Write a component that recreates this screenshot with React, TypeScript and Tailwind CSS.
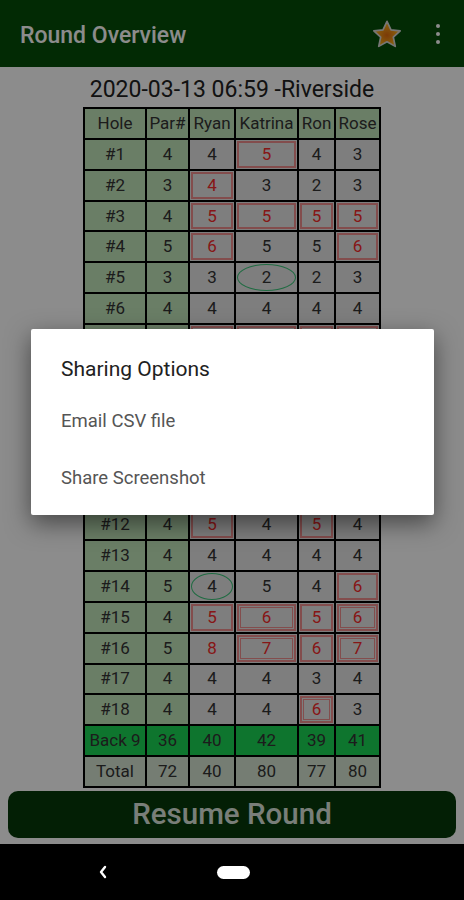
import React from 'react';

type Mark = '' | 'b' | 'd' | 'o' | 'r';
type Score = [number, Mark];

const font = { fontFamily: 'Roboto, "Liberation Sans", sans-serif' };

const players = ['Ryan', 'Katrina', 'Ron', 'Rose'];

const holes: { hole: string; par: number; scores: Score[] }[] = [
  { hole: '#1', par: 4, scores: [[4, ''], [5, 'b'], [4, ''], [3, '']] },
  { hole: '#2', par: 3, scores: [[4, 'b'], [3, ''], [2, ''], [3, '']] },
  { hole: '#3', par: 4, scores: [[5, 'b'], [5, 'b'], [5, 'b'], [5, 'b']] },
  { hole: '#4', par: 5, scores: [[6, 'b'], [5, ''], [5, ''], [6, 'b']] },
  { hole: '#5', par: 3, scores: [[3, ''], [2, 'o'], [2, ''], [3, '']] },
  { hole: '#6', par: 4, scores: [[4, ''], [4, ''], [4, ''], [4, '']] },
  { hole: '#7', par: 4, scores: [[5, 'b'], [5, 'b'], [5, 'b'], [5, 'b']] },
  { hole: '#8', par: 4, scores: [[4, ''], [4, ''], [5, 'b'], [5, 'b']] },
  { hole: '#9', par: 5, scores: [[5, ''], [5, ''], [6, 'b'], [5, '']] },
];

const back: { hole: string; par: number; scores: Score[] }[] = [
  { hole: '#10', par: 3, scores: [[2, ''], [5, 'd'], [2, ''], [4, 'b']] },
  { hole: '#11', par: 3, scores: [[4, 'b'], [3, ''], [4, 'b'], [3, '']] },
  { hole: '#12', par: 4, scores: [[5, 'b'], [4, ''], [5, 'b'], [4, '']] },
  { hole: '#13', par: 4, scores: [[4, ''], [4, ''], [4, ''], [4, '']] },
  { hole: '#14', par: 5, scores: [[4, 'o'], [5, ''], [4, ''], [6, 'b']] },
  { hole: '#15', par: 4, scores: [[5, 'b'], [6, 'd'], [5, 'b'], [6, 'd']] },
  { hole: '#16', par: 5, scores: [[8, 'r'], [7, 'd'], [6, 'b'], [7, 'd']] },
  { hole: '#17', par: 4, scores: [[4, ''], [4, ''], [3, ''], [4, '']] },
  { hole: '#18', par: 4, scores: [[4, ''], [4, ''], [6, 'd'], [3, '']] },
];

function ScoreCell({ score }: { score: Score }) {
  const [v, m] = score;
  if (m === 'b') {
    return (
      <div className="bg-[#e5e5e5] p-[1px] min-h-0 overflow-hidden">
        <div className="h-full border-2 border-[#ee8c8c] flex items-center justify-center text-[#f52a2a]">{v}</div>
      </div>
    );
  }
  if (m === 'd') {
    return (
      <div className="bg-[#e5e5e5] p-[1px] min-h-0 overflow-hidden">
        <div className="h-full border-2 border-[#ee8c8c] p-[1px]">
          <div className="h-full border border-[#ee8c8c] flex items-center justify-center text-[#f52a2a]">{v}</div>
        </div>
      </div>
    );
  }
  if (m === 'o') {
    return (
      <div className="bg-[#e5e5e5] p-[1px] min-h-0 overflow-hidden">
        <div className="h-full border-[1.5px] border-[#3cc47a] rounded-[50%] flex items-center justify-center">{v}</div>
      </div>
    );
  }
  return (
    <div className={`bg-[#e5e5e5] min-h-0 flex items-center justify-center ${m === 'r' ? 'text-[#f52a2a]' : ''}`}>{v}</div>
  );
}

function SumRow({ label, values, total }: { label: string; values: number[]; total?: boolean }) {
  const bg = total ? 'bg-[#d6e4d2]' : 'bg-[#1bd655]';
  return (
    <>
      <div className={`${bg} min-h-0 flex items-center justify-center`}>{label}</div>
      {values.map((v, i) => (
        <div key={i} className={`${bg} min-h-0 flex items-center justify-center`}>{v}</div>
      ))}
    </>
  );
}

function HoleRow({ row }: { row: { hole: string; par: number; scores: Score[] } }) {
  return (
    <>
      <div className="bg-[#c2e5bb] min-h-0 flex items-center justify-center">{row.hole}</div>
      <div className="bg-[#c2e5bb] min-h-0 flex items-center justify-center">{row.par}</div>
      {row.scores.map((s, i) => (
        <ScoreCell key={i} score={s} />
      ))}
    </>
  );
}

export default function App() {
  return (
    <div className="w-[464px] h-[900px] flex flex-col bg-white overflow-hidden" style={font}>
      <div className="relative h-[844px] flex flex-col">
        {/* app bar */}
        <div className="h-[67px] shrink-0 bg-[#054d08] flex items-center pl-[20px]">
          <span className="text-white text-[23px] font-medium flex-1 pt-[5px]">Round Overview</span>
          <svg width="32" height="31" viewBox="0 0 24 24" className="mr-[33px] mt-[2px]">
            <defs>
              <radialGradient id="sg" cx="50%" cy="55%" r="55%">
                <stop offset="0%" stopColor="#e06a10" />
                <stop offset="100%" stopColor="#ffc21a" />
              </radialGradient>
            </defs>
            <path
              d="M12 1.8l3.1 6.6 7.1.8-5.3 4.9 1.5 7.1L12 17.6l-6.4 3.6 1.5-7.1-5.3-4.9 7.1-.8z"
              fill="url(#sg)"
              stroke="#d8d8d8"
              strokeWidth="1.3"
              strokeLinejoin="round"
            />
          </svg>
          <div className="flex flex-col gap-[4px] mr-[24px]">
            <span className="w-[4px] h-[4px] rounded-full bg-white" />
            <span className="w-[4px] h-[4px] rounded-full bg-white" />
            <span className="w-[4px] h-[4px] rounded-full bg-white" />
          </div>
        </div>

        <div className="h-[40px] shrink-0 flex items-center justify-center text-[23px] text-[#222] pt-[7px]">
          2020-03-13 06:59 -Riverside
        </div>

        <div className="mx-auto shrink-0 h-[681px] grid grid-cols-[60px_41px_44px_61px_35px_43px] grid-rows-[repeat(22,minmax(0,1fr))] gap-[2px] p-[2px] bg-black text-[17px] leading-none text-[#333]">
          <div className="bg-[#c2e5bb] min-h-0 flex items-center justify-center">Hole</div>
          <div className="bg-[#c2e5bb] min-h-0 flex items-center justify-center">Par#</div>
          {players.map((p) => (
            <div key={p} className="bg-[#c2e5bb] min-h-0 flex items-center justify-center">{p}</div>
          ))}
          {holes.map((r) => (
            <HoleRow key={r.hole} row={r} />
          ))}
          <SumRow label="Front 9" values={[36, 40, 38, 38, 39]} />
          {back.map((r) => (
            <HoleRow key={r.hole} row={r} />
          ))}
          <SumRow label="Back 9" values={[36, 40, 42, 39, 41]} />
          <SumRow label="Total" values={[72, 40, 80, 77, 80]} total />
        </div>

        <div className="mx-[8px] mt-[3px] h-[47px] shrink-0 rounded-[10px] bg-[#073a0a] flex items-center justify-center text-[29.5px] font-medium text-[#dde6dd]">
          Resume Round
        </div>

        {/* scrim */}
        <div className="absolute inset-0 bg-black/45" />

        {/* dialog */}
        <div className="absolute left-[31px] top-[329px] w-[403px] bg-white rounded-[2px] shadow-[0_8px_24px_rgba(0,0,0,0.5)] pt-[26px] pb-[8px]">
          <div className="pl-[30px] h-[28px] leading-[28px] text-[21px] text-[#212121]">Sharing Options</div>
          <div className="mt-[10px]">
            <div className="h-[57px] pl-[30px] flex items-center text-[18.5px] text-[#555]">Email CSV file</div>
            <div className="h-[57px] pl-[30px] flex items-center text-[18.5px] text-[#555]">Share Screenshot</div>
          </div>
        </div>
      </div>

      {/* system nav */}
      <div className="h-[56px] shrink-0 bg-black flex items-center">
        <svg width="10" height="14" viewBox="0 0 10 14" className="ml-[98px]">
          <polyline points="7,2 3,7 7,12" fill="none" stroke="white" strokeWidth="2.4" strokeLinecap="round" strokeLinejoin="round" />
        </svg>
        <div className="ml-[109px] w-[33px] h-[13px] rounded-full bg-white" />
      </div>
    </div>
  );
}
